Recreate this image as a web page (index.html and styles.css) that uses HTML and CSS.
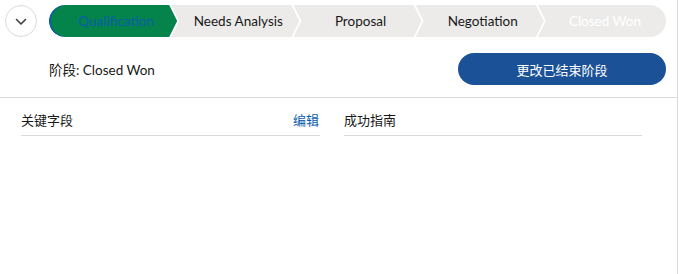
FILE: index.html
```html
<!DOCTYPE html>
<html lang="zh">
<head>
<meta charset="utf-8">
<link rel="stylesheet" href="styles.css">
</head>
<body>
<div class="card">
  <div class="path-row">
    <button class="toggle" type="button" aria-label="展开">
      <svg width="12" height="8" viewBox="0 0 12 8"><path d="M1.5 1.5 L6 6 L10.5 1.5" fill="none" stroke="#3e3e3c" stroke-width="1.6" stroke-linecap="round" stroke-linejoin="round"/></svg>
    </button>
    <div class="path">
      <div class="stage first complete"><span>Qualification</span></div>
      <div class="stage"><span>Needs Analysis</span></div>
      <div class="stage"><span>Proposal</span></div>
      <div class="stage"><span>Negotiation</span></div>
      <div class="stage last won"><span>Closed Won</span></div>
    </div>
  </div>
  <div class="status-row">
    <div class="status">阶段: Closed Won</div>
    <button class="change" type="button">更改已结束阶段</button>
  </div>
  <div class="details">
    <div class="col">
      <div class="col-head">
        <span>关键字段</span>
        <a class="edit" href="#">编辑</a>
      </div>
    </div>
    <div class="col">
      <div class="col-head">
        <span>成功指南</span>
      </div>
    </div>
  </div>
</div>
</body>
</html>
```
FILE: styles.css
```css
html, body {
  margin: 0;
  padding: 0;
  background: #ffffff;
}
body {
  font-family: "Lato", "Noto Sans CJK SC", sans-serif;
  color: #181818;
  font-size: 13px;
}
.card {
  width: 677px;
  height: 274px;
  border-right: 1px solid #dddbda;
}
.path-row {
  display: flex;
  align-items: center;
  padding: 5px 11px 0 5px;
  gap: 12px;
}
.toggle {
  width: 32px;
  height: 32px;
  border-radius: 50%;
  border: 1px solid #dddbda;
  background: #fff;
  padding: 0;
  display: flex;
  align-items: center;
  justify-content: center;
  flex: none;
}
.toggle svg { display: block; margin-top: 1px; }
.path {
  flex: 1;
  display: flex;
  height: 32px;
  border-radius: 16px;
  overflow: hidden;
}
.stage {
  flex: 1 1 0;
  min-width: 0;
  background: #ecebea;
  display: flex;
  align-items: center;
  justify-content: center;
  margin-left: -6px;
  clip-path: polygon(0 0, calc(100% - 8px) 0, 100% 50%, calc(100% - 8px) 100%, 0 100%, 8px 50%);
  font-size: 13.5px;
  color: #181818;
  white-space: nowrap;
}
.stage span { padding-left: 6px; }
.stage.first {
  margin-left: 0;
  clip-path: polygon(0 0, calc(100% - 8px) 0, 100% 50%, calc(100% - 8px) 100%, 0 100%);
}
.stage.last {
  clip-path: polygon(0 0, 100% 0, 100% 100%, 0 100%, 8px 50%);
}
.stage.complete {
  background: #04844b;
  color: #0b5cab;
  border-radius: 16px 0 0 16px;
  box-shadow: inset 2px 0 0 #0b5cab;
}
.stage.won {
  color: #ffffff;
}
.status-row {
  display: flex;
  align-items: center;
  justify-content: space-between;
  padding: 16px 11px 12px 49px;
  border-bottom: 1px solid #dddbda;
}
.status {
  font-size: 13.5px;
  color: #181818;
}
.change {
  width: 208px;
  height: 32px;
  border-radius: 16px;
  border: none;
  background: #1b5297;
  color: #ffffff;
  font-family: "Lato", "Noto Sans CJK SC", sans-serif;
  font-size: 13px;
  padding: 0;
}
.details {
  display: grid;
  grid-template-columns: 299px 298px;
  column-gap: 24px;
  padding: 0 0 0 21px;
}
.col-head {
  display: flex;
  justify-content: space-between;
  align-items: center;
  padding: 13px 0 6px 0;
  line-height: 18px;
  border-bottom: 1px solid #dddbda;
  font-size: 13px;
}
.edit {
  color: #0b5cab;
  text-decoration: none;
  margin-right: 1px;
}
```
